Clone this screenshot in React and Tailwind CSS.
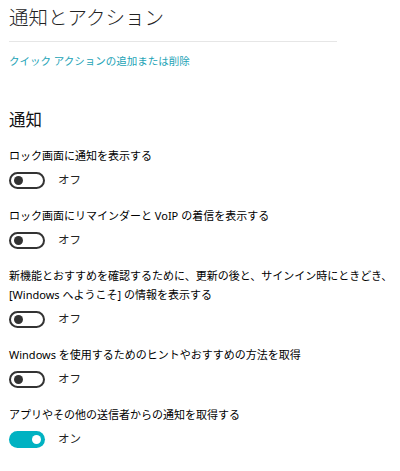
import React from "react";

const items = [
  { label: ["ロック画面に通知を表示する"], on: false },
  { label: ["ロック画面にリマインダーと VoIP の着信を表示する"], on: false },
  {
    label: [
      "新機能とおすすめを確認するために、更新の後と、サインイン時にときどき、",
      "[Windows へようこそ] の情報を表示する",
    ],
    on: false,
  },
  { label: ["Windows を使用するためのヒントやおすすめの方法を取得"], on: false },
  { label: ["アプリやその他の送信者からの通知を取得する"], on: true },
];

const Toggle = ({ on }) =>
  on ? (
    <div className="w-[36px] h-[17px] rounded-full bg-[#00b2c2] flex items-center justify-end pr-[4px]">
      <div className="w-[9px] h-[9px] rounded-full bg-white" />
    </div>
  ) : (
    <div className="w-[36px] h-[17px] rounded-full border-2 border-[#333] flex items-center pl-[3px]">
      <div className="w-[9px] h-[9px] rounded-full bg-[#333]" />
    </div>
  );

export default function App() {
  return (
    <div
      className="w-[400px] h-[471px] bg-white text-black overflow-hidden pl-[9px]"
      style={{ fontFamily: '"Noto Sans", "Noto Sans CJK JP", sans-serif' }}
    >
      <h1 className="pt-[4px] text-[19.5px] leading-[28px] font-light text-[#222]">
        通知とアクション
      </h1>
      <div className="mt-[9px] h-px w-[328px] bg-[#e6e6e6]" />

      <a className="block mt-[11px] text-[10.5px] leading-[16px] text-[#1ca3b6]">
        クイック アクションの追加または削除
      </a>

      <h2 className="mt-[39px] text-[16.5px] leading-[24px] text-[#111]">通知</h2>

      <div className="mt-[14px] flex flex-col gap-[16px]">
        {items.map((item, i) => (
          <div key={i}>
            {item.label.map((line, j) => (
              <div key={j} className="text-[11px] leading-[19px] whitespace-nowrap">
                {line}
              </div>
            ))}
            <div className="mt-[5px] h-[20px] flex items-center gap-[13px]">
              <Toggle on={item.on} />
              <span className="text-[11.5px] text-[#222]">{item.on ? "オン" : "オフ"}</span>
            </div>
          </div>
        ))}
      </div>
    </div>
  );
}
